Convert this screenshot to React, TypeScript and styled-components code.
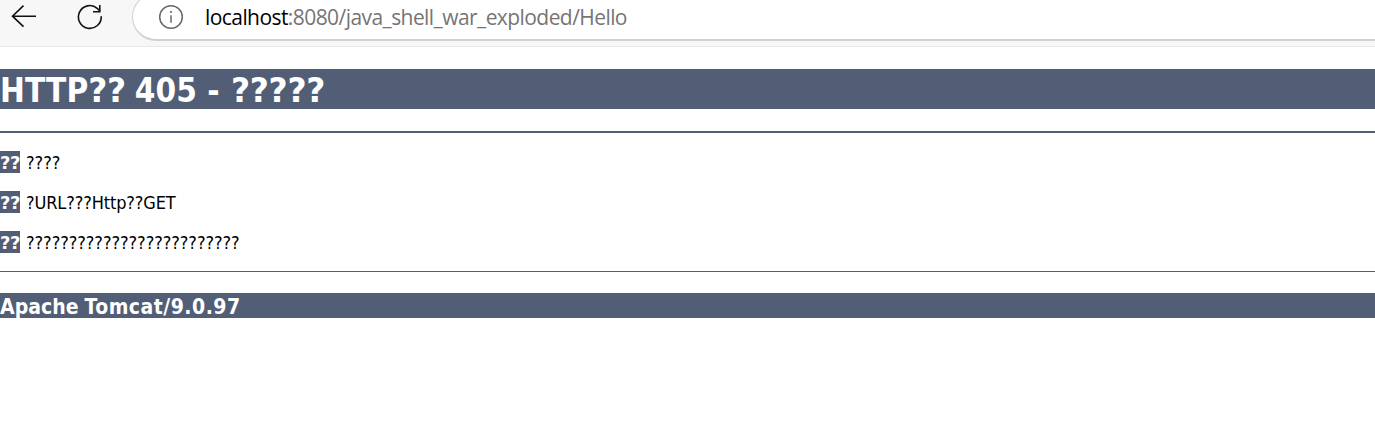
import React from 'react';
import styled, { createGlobalStyle } from 'styled-components';

const GlobalStyle = createGlobalStyle`
  body {
    margin: 0;
    background: #fff;
    overflow: hidden;
  }
`;

const slate = '#525d76';

const Page = styled.div`
  height: 424px;
  overflow: hidden;
  white-space: nowrap;
  font-family: Tahoma, 'DejaVu Sans Condensed', 'DejaVu Sans', sans-serif;
  font-stretch: condensed;
  color: #000;
`;

const Toolbar = styled.header`
  box-sizing: border-box;
  height: 47px;
  display: flex;
  align-items: flex-start;
  background: #f7f7f7;
  border-bottom: 1px solid #e8e8e8;
`;

const ToolButtons = styled.div`
  width: 132px;
  height: 34px;
  flex: none;
`;

const AddressBar = styled.div`
  box-sizing: border-box;
  flex: 1;
  height: 48px;
  margin: -7px -40px 0 0;
  padding: 0 0 0 25px;
  display: flex;
  align-items: center;
  background: #fff;
  border: 1px solid #d1d1d1;
  border-bottom-width: 2px;
  border-radius: 24px;
`;

const Url = styled.div`
  margin-left: 21px;
  padding-top: 1px;
  font: 21px/30px 'Segoe UI', 'Open Sans', sans-serif;
  letter-spacing: -0.57px;
  color: #757575;
`;

const Host = styled.span`
  color: #000;
`;

const Report = styled.main`
  padding-top: 22px;
`;

const Title = styled.h1`
  margin: 0 0 22px;
  height: 40px;
  font-size: 33px;
  line-height: 44px;
  font-weight: 700;
  letter-spacing: 0.1px;
  word-spacing: -1.7px;
  color: #fff;
  background: ${slate};
`;

const Wide = styled.span`
  font-family: Tahoma, 'DejaVu Sans', sans-serif;
  font-stretch: normal;
  letter-spacing: -0.3px;
`;

const Dash = styled.span`
  margin: 0 2.5px 0 1.5px;
`;

const Rule = styled.div<{ $thickness: number }>`
  height: ${(p) => p.$thickness}px;
  background: ${slate};
`;

const Details = styled.section`
  padding: 18px 0;
  display: grid;
  gap: 18px;
`;

const Detail = styled.p`
  margin: 0;
  height: 22px;
  display: flex;
  gap: 6px;
  font-size: 18px;
  line-height: 24px;
`;

const Label = styled.b`
  width: 20px;
  height: 22px;
  font-family: Tahoma, 'DejaVu Sans', sans-serif;
  font-stretch: normal;
  letter-spacing: -0.4px;
  color: #fff;
  background: ${slate};
`;

const Value = styled.span<{ $tracking: number }>`
  letter-spacing: ${(p) => p.$tracking}px;
`;

const Server = styled.h3`
  margin: 21px 0 0;
  height: 25px;
  font-size: 21px;
  line-height: 28px;
  font-weight: 700;
  letter-spacing: 0.5px;
  word-spacing: -1.2px;
  color: #fff;
  background: ${slate};
`;

const Vendor = styled.span`
  letter-spacing: 0.05px;
`;

const details = [
  { label: '??', value: '????', tracking: 0 },
  { label: '??', value: '?URL???Http??GET', tracking: -0.12 },
  { label: '??', value: '?????????????????????????', tracking: -0.05 },
];

export default function App() {
  return (
    <Page>
      <GlobalStyle />
      <Toolbar>
        <ToolButtons>
          <svg width="132" height="34" fill="none" stroke="#111" strokeWidth="1.6">
            <path d="M36 16.2H12.5M23.5 5.7L12.5 16.2L23.5 26.7" />
            <path d="M101.2 16.2A11.4 11.4 0 1 1 97.2 8.3L100 11" />
            <path d="M99.8 5V11.8H93" />
          </svg>
        </ToolButtons>
        <AddressBar>
          <svg width="26" height="26" fill="none" stroke="#686868" strokeWidth="1.5">
            <circle cx="13" cy="13" r="11.3" />
            <path d="M13 11.3V18.7" />
            <circle cx="13" cy="8" r="1.1" fill="#686868" stroke="none" />
          </svg>
          <Url>
            <Host>localhost</Host>:8080/java_shell_war_exploded/Hello
          </Url>
        </AddressBar>
      </Toolbar>
      <Report>
        <Title>
          HTTP<Wide>??</Wide> 405 <Dash>-</Dash> <Wide>?????</Wide>
        </Title>
        <Rule $thickness={2} />
        <Details>
          {details.map((d) => (
            <Detail key={d.value}>
              <Label>{d.label}</Label>
              <Value $tracking={d.tracking}>{d.value}</Value>
            </Detail>
          ))}
        </Details>
        <Rule $thickness={1} />
        <Server>
          <Vendor>Apache</Vendor> Tomcat/9.0.97
        </Server>
      </Report>
    </Page>
  );
}
